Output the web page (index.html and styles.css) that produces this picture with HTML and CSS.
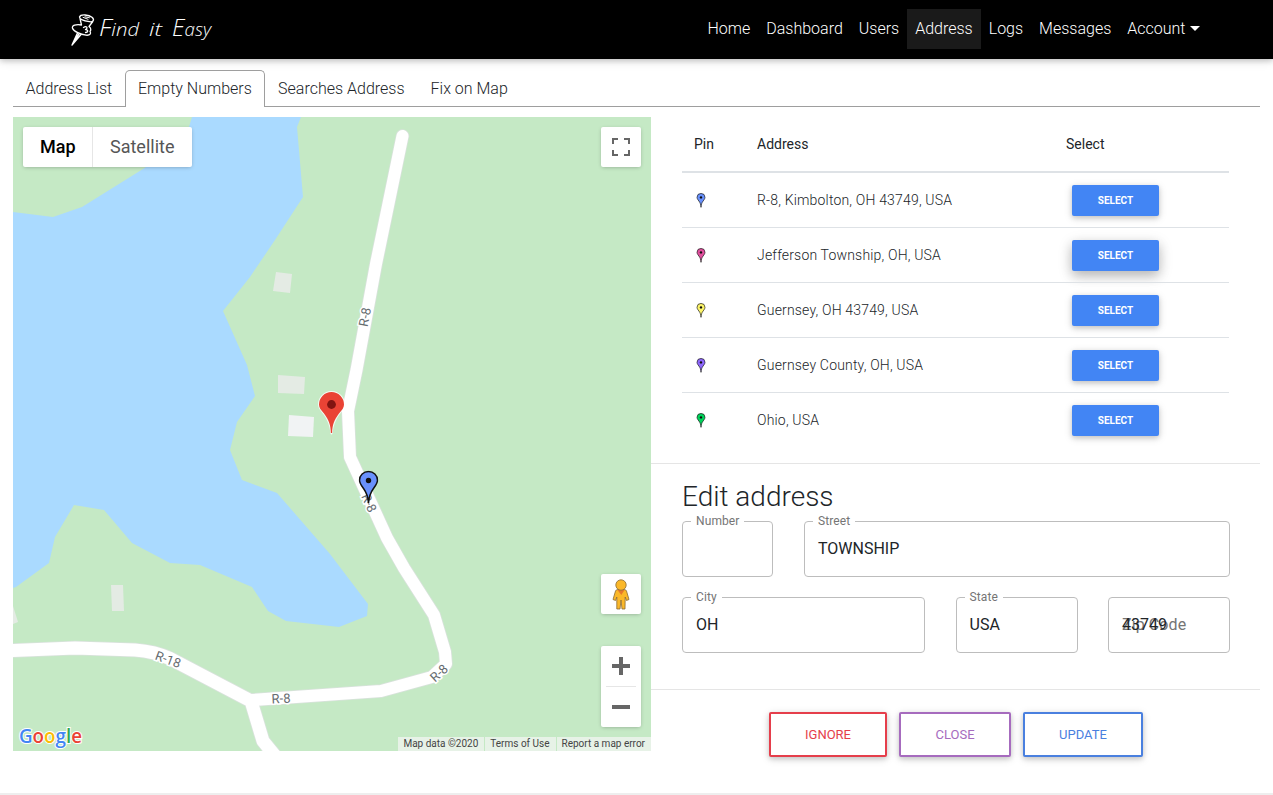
FILE: index.html
```html
<!DOCTYPE html>
<html lang="en">
<head>
<meta charset="utf-8">
<title>Find it Easy</title>
<link rel="stylesheet" href="styles.css">
</head>
<body>
<svg class="defs" width="0" height="0" aria-hidden="true">
  <symbol id="pin" viewBox="0 0 20 34">
    <path d="M10 32.5C9.6 26 8.400 22.600 5.200 18.200 2.600 14.600 1 12.800 1 9.800A9 8.800 0 0 1 19 9.800C19 12.800 17.400 14.600 14.800 18.200 11.600 22.600 10.400 26 10 32.500Z" fill="currentColor" stroke="#111" stroke-width="1.500"/>
    <circle cx="10" cy="10" r="2.700" fill="#111"/>
  </symbol>
</svg>

<header class="navbar">
  <a class="brand">
    <svg width="150" height="44" viewBox="64 8 150 44">
      <g fill="none" stroke="#fff" stroke-linecap="round" stroke-linejoin="round" transform="translate(0 1)">
        <path stroke-width="1.300" d="M79.500 17C80.500 13.800 89 14.800 92 17.200 95 19.800 93 22.300 89.500 21.700 85 21 79.500 19.500 79.500 17ZM80 18.500L81.500 25M92.800 21.500L89 26.500M81.500 25C76 24 71.500 25.500 72.500 28.200 73.500 31.500 81 34.500 86 35.200 90.500 35.600 91.300 33.500 90 31.200M89 26.500C91 28 91.300 30 90 31.500M83.500 27.500C86.500 25.500 88.500 28 85.500 29.500 89 30 88 32.500 85.500 32.500"/>
        <path stroke-width="1" d="M83 17.300L88 19.300M85 16.800L89.500 17.800"/>
        <path stroke-width="1.400" d="M77.500 33L72 45 81 34.500M79 34L74 41.500"/>
      </g>
      <g class="brand-text">
        <text x="99" y="37" textLength="40" lengthAdjust="spacingAndGlyphs">F<tspan class="low">ind</tspan></text>
        <text class="low" x="149" y="36.500" textLength="13" lengthAdjust="spacingAndGlyphs">it</text>
        <text x="172" y="37" textLength="39" lengthAdjust="spacingAndGlyphs">E<tspan class="low">asy</tspan></text>
      </g>
    </svg>
  </a>
  <nav class="nav">
    <a>Home</a><a>Dashboard</a><a>Users</a><a class="current">Address</a><a>Logs</a><a>Messages</a><a>Account<span class="caret"></span></a>
  </nav>
</header>

<div class="tabs">
  <a>Address List</a><a class="active">Empty Numbers</a><a>Searches Address</a><a>Fix on Map</a>
</div>

<main class="content">
  <section class="map">
    <svg class="map-canvas" width="638" height="634" viewBox="13 117 638 634">
      <rect x="13" y="117" width="638" height="634" fill="#c5e9c5"/>
      <path fill="#aadaff" d="M13 212L53 217 82 207 143 169 185 140 192 117H301L297 127 303 197 275 240 250 277 223 311 247 365 255 396 237 422 230 450 242 480 277 493 330 554 368 604 367 616 339 627 286 621 268 611 252 587 200 565 170 563 132 543 104 510 74 505 55 537 49 563 16 587 13 588Z"/>
      <g fill="#e4ebe4">
        <path d="M276 272L292 274 290 293 273 291ZM278 375L305 377 304 394 278 393ZM111 585H123L124 611H112ZM13 606L18 622 13 624Z"/>
        <path fill="#f1f3f4" d="M289 415L314 417 313 437 288 436Z"/>
      </g>
      <g fill="none" stroke-linejoin="round">
        <g stroke="#d9e2dc">
          <path stroke-linecap="round" stroke-width="13.500" d="M402.500 136L376 264 356.500 370 348 411 350 457 387 538 404 568 434 615 445 652 446 664 432 677 381 691 252 700"/>
          <path stroke-width="14.500" d="M12 650.500L75 648 135 650Q155 651.500 170 658.500L251 701 263 741 276 757"/>
        </g>
        <g stroke="#fff">
          <path stroke-linecap="round" stroke-width="12" d="M402.500 136L376 264 356.500 370 348 411 350 457 387 538 404 568 434 615 445 652 446 664 432 677 381 691 252 700"/>
          <path stroke-width="13" d="M12 650.500L75 648 135 650Q155 651.500 170 658.500L251 701 263 741 276 757"/>
        </g>
      </g>
      <g class="road-label">
        <text transform="translate(365 317) rotate(-79)" y="4.500">R-8</text>
        <text transform="translate(369 503) rotate(65)" y="4.500">R-8</text>
        <text transform="translate(439 673) rotate(-42)" y="4.500">R-8</text>
        <text transform="translate(281 698.500) rotate(-3)" y="4.500">R-8</text>
        <text transform="translate(168 659.500) rotate(20)" y="4.500">R-18</text>
      </g>
      <path d="M331.500 433.500C330.600 425 329 420 324 413.500 320.500 409.500 319 407.500 319 404.500A12.500 12.500 0 0 1 344 404.500C344 407.500 342.500 409.500 339 413.500 334 420 332.400 425 331.500 433.500Z" fill="none" stroke="#fff" stroke-opacity=".8" stroke-width="2" stroke-linejoin="round"/>
      <path d="M330.900 433C330.600 425 329 420 324 413.500 320.500 409.500 319 407.500 319 404.500A12.500 12.500 0 0 1 344 404.500C344 407.500 342.500 409.500 339 413.500 334 420 332.400 425 332.100 433Z" fill="#ea4335"/>
      <circle cx="331.500" cy="404.500" r="4.400" fill="#811411"/>
      <use href="#pin" x="358.500" y="470.500" width="20" height="34" color="#6991fd"/>
    </svg>
    <div class="map-type"><span class="selected">Map</span><span>Satellite</span></div>
    <div class="map-btn fullscreen">
      <svg width="18" height="18" viewBox="0 0 18 18" fill="none" stroke="#666" stroke-width="2"><path d="M1 6V1H6M12 1H17V6M17 12V17H12M6 17H1V12"/></svg>
    </div>
    <div class="map-btn person">
      <svg width="18" height="31" viewBox="0 0 18 31">
        <path d="M3.500 12Q4 10.500 6 10.500H12Q14 10.500 14.500 12L17 20.500 14.500 21.500 13.200 18 13 30H10L9 21 8 30H4.800L4.800 18 3.500 21.500 1 20.500Z" fill="#fbb829" stroke="#8a6b35" stroke-width=".8"/>
        <path d="M5.500 11L9.300 16 12.500 11Z" fill="#e5772d"/>
        <circle cx="9" cy="6" r="5.200" fill="#fbb829" stroke="#8a6b35" stroke-width=".8"/>
      </svg>
    </div>
    <div class="zoom">
      <svg width="40" height="81" viewBox="0 0 40 81"><path fill="#666" d="M11 18H18V11H22V18H29V22H22V29H18V22H11ZM11 59H29V63H11Z"/><path fill="#e6e6e6" d="M5 40H35V41H5Z"/></svg>
    </div>
    <svg class="google" width="66" height="32" viewBox="0 0 66 32">
      <text class="google-text" x="1" y="23.500" textLength="63" lengthAdjust="spacingAndGlyphs"><tspan fill="#4285f4">G</tspan><tspan fill="#ea4335">o</tspan><tspan fill="#fbbc04">o</tspan><tspan fill="#4285f4">g</tspan><tspan fill="#34a853">l</tspan><tspan fill="#ea4335">e</tspan></text>
    </svg>
    <div class="credits"><span>Map data ©2020</span><span>Terms of Use</span><span>Report a map error</span></div>
  </section>

  <section class="panel">
    <table class="results">
      <thead><tr><th class="col-pin">Pin</th><th class="col-address">Address</th><th>Select</th></tr></thead>
      <tbody>
        <tr><td><svg class="pin blue"><use href="#pin"/></svg></td><td>R-8, Kimbolton, OH 43749, USA</td><td><button class="select">Select</button></td></tr>
        <tr><td><svg class="pin pink"><use href="#pin"/></svg></td><td>Jefferson Township, OH, USA</td><td><button class="select raised">Select</button></td></tr>
        <tr><td><svg class="pin yellow"><use href="#pin"/></svg></td><td>Guernsey, OH 43749, USA</td><td><button class="select">Select</button></td></tr>
        <tr><td><svg class="pin purple"><use href="#pin"/></svg></td><td>Guernsey County, OH, USA</td><td><button class="select">Select</button></td></tr>
        <tr><td><svg class="pin green"><use href="#pin"/></svg></td><td>Ohio, USA</td><td><button class="select">Select</button></td></tr>
      </tbody>
    </table>
    <div class="edit">
      <h2>Edit address</h2>
      <div class="row first">
        <div class="field"><label>Number</label></div>
        <div class="field"><label>Street</label><span>TOWNSHIP</span></div>
      </div>
      <div class="row second">
        <div class="field"><label>City</label><span>OH</span></div>
        <div class="field"><label>State</label><span>USA</span></div>
        <div class="field resting"><label>Zip Code</label><span>43749</span></div>
      </div>
    </div>
    <div class="actions">
      <button class="ignore">Ignore</button><button class="close">Close</button><button class="update">Update</button>
    </div>
  </section>
</main>
<footer class="footer"></footer>
</body>
</html>
```
FILE: styles.css
```css
* { box-sizing: border-box; }
body { margin: 0; height: 795px; overflow: hidden; background: #fff; color: #212529; font: 300 16px/24px Roboto, sans-serif; display: flex; flex-direction: column; }
.defs { position: absolute; }
.navbar { flex: none; height: 59px; padding: 0 65.500px 1px 64px; background: #000; display: flex; align-items: center; justify-content: space-between; box-shadow: 0 2px 5px rgba(0,0,0,.16), 0 2px 10px rgba(0,0,0,.12); }
.brand svg { display: block; }
.brand-text { fill: #fff; font: italic 300 24px "Open Sans", sans-serif; }
.brand-text .low { font-size: 19px; }
.nav { display: flex; color: #fff; }
.nav a { height: 40px; padding: 8px; display: flex; align-items: center; }
.nav .current { background: #1a1a1a; }
.caret { margin: -2px 0 0 4px; border: 5px solid transparent; border-top-color: #fff; border-bottom: 0; }
.tabs { flex: none; height: 37px; margin: 11px 13px 0; display: flex; border-bottom: 1px solid #9e9e9e; }
.tabs a { height: 37px; padding: 6px 12px; border: 1px solid transparent; border-bottom: 0; }
.tabs a:first-child { padding-left: 11.500px; padding-right: 11.500px; }
.tabs .active { background: #fff; border-color: #9e9e9e; border-radius: 5px 5px 0 0; padding: 6px 12.300px; }
.content { flex: none; height: 634px; margin: 10px 13px 0; display: grid; grid-template: 634px / 638px 1fr; }
.map { position: relative; overflow: hidden; }
.map-canvas { display: block; }
.road-label { font: 400 13px Roboto, sans-serif; fill: #666c70; stroke: #fff; stroke-width: 3px; paint-order: stroke; text-anchor: middle; }
.map-type, .map-btn, .zoom { position: absolute; background: #fff; border-radius: 2px; box-shadow: 0 1px 4px -1px rgba(0,0,0,.3); }
.map-type { left: 10px; top: 10px; width: 169px; height: 40px; display: flex; font-size: 18px; line-height: 40px; font-weight: 400; color: #565656; }
.map-type span { padding: 0 17px; }
.map-type .selected { width: 70px; font-weight: 500; color: #000; border-right: 1px solid #e6e6e6; }
.map-btn { right: 10px; width: 40px; height: 40px; display: flex; align-items: center; justify-content: center; }
.fullscreen { top: 10px; }
.person { top: 457px; }
.zoom { right: 10px; top: 529px; height: 81px; }
.zoom svg { display: block; }
.google { position: absolute; left: 5px; bottom: 0; overflow: visible; }
.google-text { font: 600 19px "Open Sans", sans-serif; stroke: #fff; stroke-width: 2px; paint-order: stroke; }
.credits { position: absolute; right: 0; bottom: 0; height: 14px; display: flex; gap: 1px; font: 400 10px/14px Roboto, sans-serif; color: #444; }
.credits span { padding: 0 6px 0 5px; background: rgba(245,245,245,.7); }
.results { width: 547px; margin: 0 31px; border-collapse: collapse; table-layout: fixed; font-size: 14px; }
.results th { height: 55px; padding: 0 12px; text-align: left; font-weight: 400; border-bottom: 2px solid #dee2e6; }
.results td { height: 55px; padding: 1px 12px 0; border-top: 1px solid #dee2e6; letter-spacing: .18px; }
.col-pin { width: 63px; }
.col-address { width: 309px; }
.pin { display: block; width: 14px; height: 15px; margin-top: 1px; }
.blue { color: #6991fd; }
.pink { color: #e14f9e; }
.yellow { color: #fdf569; }
.purple { color: #8e67fd; }
.green { color: #00d45b; }
.select { display: block; width: 87px; height: 31px; margin: 1px 0 0 6px; padding: 0; border: 0; border-radius: 2px; background: #4285f4; color: #fff; font: 700 10px Roboto, sans-serif; text-transform: uppercase; box-shadow: 0 2px 5px rgba(0,0,0,.16), 0 2px 10px rgba(0,0,0,.12); }
.raised { box-shadow: 0 5px 11px rgba(0,0,0,.18), 0 4px 15px rgba(0,0,0,.15); }
.edit { height: 226px; margin-top: 16px; padding: 16px 30px 0 31px; border-top: 1px solid #e5e5e5; }
h2 { margin: 0 0 7px; font-size: 28px; line-height: 34px; font-weight: 300; }
.row { display: grid; }
.first { grid-template-columns: 91px 426px; gap: 31px; }
.second { grid-template-columns: 243px 122px 122px; column-gap: 30.500px; margin-top: 20px; }
.field { position: relative; height: 56px; padding: 15px 13px; border: 1px solid #bdbdbd; border-radius: 4px; font-weight: 400; }
.field label { position: absolute; left: 8px; top: -9px; padding: 0 5px; background: #fff; color: #757575; font-size: 12px; line-height: 16px; letter-spacing: .1px; }
.field span { position: relative; display: block; }
.field.resting label { top: 15px; font-size: 16px; line-height: 24px; background: none; }
.actions { display: flex; gap: 12px; padding: 22px 0 0 118px; border-top: 1px solid #e5e5e5; }
.actions button { width: 118px; height: 45px; padding: 0; background: #fff; border: 2px solid; border-radius: 2px; font: 400 13px Roboto, sans-serif; text-transform: uppercase; box-shadow: 0 2px 5px rgba(0,0,0,.16), 0 2px 10px rgba(0,0,0,.12); }
.actions .ignore { color: #e53e4b; }
.actions .close { width: 112px; color: #a66bbe; }
.actions .update { width: 120px; color: #4a80df; }
.footer { flex: none; height: 2px; margin-top: 42px; background: #eee; }
```
